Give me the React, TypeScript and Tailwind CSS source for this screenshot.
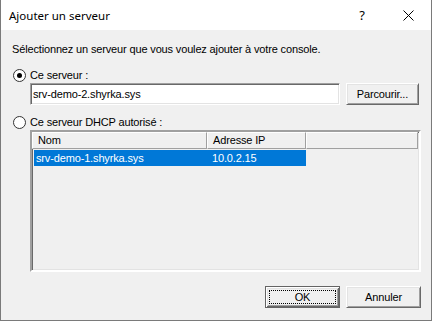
import React from "react";

function Radio({ checked }: { checked: boolean }) {
  return (
    <svg width="13" height="13" viewBox="0 0 13 13" className="shrink-0">
      <circle cx="6.5" cy="6.5" r="6" fill="#ffffff" stroke="#333333" strokeWidth="1" />
      {checked && <circle cx="6.5" cy="6.5" r="2.5" fill="#000000" />}
    </svg>
  );
}

export default function App() {
  return (
    <div className="w-[433px] h-[321px] bg-white">
      <div className="w-[432px] h-[321px] flex flex-col border-x border-b border-[#7a7a7a] bg-[#f0f0f0] font-['Liberation_Sans',Arial,sans-serif] text-[11px] leading-[13px] tracking-[-0.15px] text-black">
        {/* Title bar */}
        <div className="h-[30px] shrink-0 bg-white flex items-center tracking-normal">
          <span className="pl-[8px] text-[11.5px] font-['Noto_Sans',sans-serif] flex-1">Ajouter un serveur</span>
          <span className="w-[46px] text-center text-[13px] font-['Noto_Sans',sans-serif]">?</span>
          <span className="w-[46px] flex justify-center">
            <svg width="11" height="11" viewBox="0 0 11 11">
              <path d="M0.5 0.5 L10.5 10.5 M10.5 0.5 L0.5 10.5" stroke="#000" strokeWidth="1" />
            </svg>
          </span>
        </div>

        {/* Body */}
        <div className="flex flex-col pl-[11px]">
          <div className="mt-[13px] h-[13px] whitespace-nowrap">
            Sélectionnez un serveur que vous voulez ajouter à votre console.
          </div>

          <div className="mt-[13px] h-[13px] flex items-center gap-[4px] pl-[1px]">
            <Radio checked />
            <span>Ce serveur :</span>
          </div>

          <div className="mt-[1px] h-[22px] flex pl-[18px] gap-[6px]">
            <div className="w-[310px] h-[22px] bg-white border border-t-[#a0a0a0] border-l-[#a0a0a0] border-b-white border-r-white shadow-[inset_1px_1px_0_#696969,inset_-1px_-1px_0_#e3e3e3] flex items-center pl-[2px]">
              srv-demo-2.shyrka.sys
            </div>
            <div className="w-[73px] h-[22px] bg-[#f0f0f0] border border-t-white border-l-white border-b-[#696969] border-r-[#696969] shadow-[inset_1px_1px_0_#e3e3e3,inset_-1px_-1px_0_#a0a0a0] flex items-center justify-center">
              Parcourir...
            </div>
          </div>

          <div className="mt-[11px] h-[13px] flex items-center gap-[4px] pl-[1px]">
            <Radio checked={false} />
            <span>Ce serveur DHCP autorisé :</span>
          </div>

          {/* List view */}
          <div className="mt-[1px] ml-[18px] w-[391px] h-[142px] border-2 border-t-[#a0a0a0] border-l-[#a0a0a0] border-b-white border-r-white shadow-[inset_1px_1px_0_#696969,inset_-1px_-1px_0_#e3e3e3] p-[1px] pl-0 pt-0 flex flex-col">
            <div className="h-[17px] flex shrink-0">
              <div className="w-[175px] border border-t-white border-l-white border-b-[#a0a0a0] border-r-[#a0a0a0] pl-[5px] flex items-center">Nom</div>
              <div className="w-[99px] border border-t-white border-l-white border-b-[#a0a0a0] border-r-[#a0a0a0] pl-[5px] flex items-center">Adresse IP</div>
              <div className="flex-1 border border-t-white border-l-white border-b-[#a0a0a0] border-r-[#a0a0a0]" />
            </div>
            <div className="mt-[1px] ml-[2px] w-[272px] h-[16px] bg-[#0078d7] text-white flex items-center">
              <span className="w-[178px] pl-[2px]">srv-demo-1.shyrka.sys</span>
              <span>10.0.2.15</span>
            </div>
          </div>

          {/* Buttons */}
          <div className="mt-[14px] flex justify-end pr-[10px] gap-[6px]">
            <div className="w-[75px] h-[22px] border border-[#646464] bg-[#f0f0f0] shadow-[inset_1px_1px_0_#ffffff,inset_-1px_-1px_0_#696969,inset_2px_2px_0_#e3e3e3,inset_-2px_-2px_0_#a0a0a0] p-[3px]">
              <div className="w-full h-full border border-dotted border-black flex items-center justify-center">OK</div>
            </div>
            <div className="w-[75px] h-[22px] bg-[#f0f0f0] border border-t-white border-l-white border-b-[#696969] border-r-[#696969] shadow-[inset_1px_1px_0_#e3e3e3,inset_-1px_-1px_0_#a0a0a0] flex items-center justify-center">
              Annuler
            </div>
          </div>
        </div>
      </div>
    </div>
  );
}
